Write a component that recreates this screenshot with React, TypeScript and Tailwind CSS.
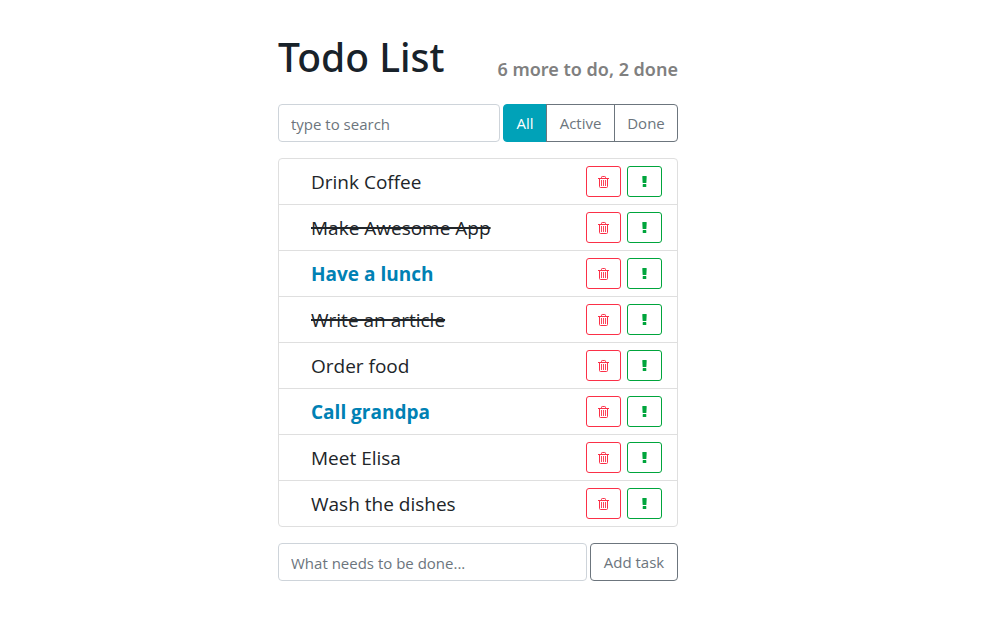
import { useState, type FormEvent } from "react";
import clsx from "clsx";

type Todo = { id: number; label: string; done?: boolean; important?: boolean };
type Filter = "All" | "Active" | "Done";

const initialTodos: Todo[] = [
  { id: 1, label: "Drink Coffee" },
  { id: 2, label: "Make Awesome App", done: true },
  { id: 3, label: "Have a lunch", important: true },
  { id: 4, label: "Write an article", done: true },
  { id: 5, label: "Order food" },
  { id: 6, label: "Call grandpa", important: true },
  { id: 7, label: "Meet Elisa" },
  { id: 8, label: "Wash the dishes" },
];

const filters: { name: Filter; width: string }[] = [
  { name: "All", width: "w-11 rounded-l" },
  { name: "Active", width: "w-[69px] -ml-px" },
  { name: "Done", width: "w-16 -ml-px rounded-r" },
];

function TrashIcon() {
  return (
    <svg viewBox="0 0 11 13" className="h-[13px] w-[11px] fill-none stroke-current" aria-hidden="true">
      <path d="M0 3.5h11M3.5 3.5v-1.2q0-.8.8-.8h2.4q.8 0 .8.8v1.2M1.5 3.5v8q0 1 1 1h6q1 0 1-1v-8" />
      <path d="M3.5 5v6M5.5 5v6M7.5 5v6" strokeWidth="0.9" />
    </svg>
  );
}

function ExclamationIcon() {
  return (
    <svg viewBox="0 0 5 13" className="h-[13px] w-[5px] fill-current" aria-hidden="true">
      <path d="M.7 1h3.6q.4 0 .4.5l-.3 6q0 .5-.5.5h-2.8q-.5 0-.5-.5l-.3-6q0-.5.4-.5zM1.2 9h2.6q.5 0 .5.5v2q0 .5-.5.5h-2.6q-.5 0-.5-.5v-2q0-.5.5-.5z" />
    </svg>
  );
}

const inputStyle =
  "h-[38px] min-w-0 flex-1 rounded border border-[#ced4da] bg-white px-3 pt-0.5 text-[15px] text-[#495057] placeholder:text-[#6c757d]";
const iconButtonStyle = "flex h-[31px] w-[35px] items-center justify-center rounded-[3px] border";

export default function App() {
  const [todos, setTodos] = useState(initialTodos);
  const [filter, setFilter] = useState<Filter>("All");
  const [term, setTerm] = useState("");
  const [label, setLabel] = useState("");

  const doneCount = todos.filter((t) => t.done).length;
  const visible = todos.filter(
    (t) =>
      t.label.toLowerCase().includes(term.toLowerCase()) &&
      (filter === "All" || (filter === "Done") === Boolean(t.done)),
  );

  const toggle = (id: number, key: "done" | "important") =>
    setTodos(todos.map((t) => (t.id === id ? { ...t, [key]: !t[key] } : t)));

  const addTask = (e: FormEvent) => {
    e.preventDefault();
    if (!label.trim()) return;
    setTodos([...todos, { id: Date.now(), label }]);
    setLabel("");
  };

  return (
    <div className="pt-8 font-['Open_Sans',sans-serif] text-[#212529] sm:pr-[52px]">
      <main className="mx-auto max-w-[400px]">
        <header className="flex items-end justify-between font-['Noto_Sans',sans-serif]">
          <h1 className="text-[39px] leading-[50px] font-medium text-[#18222a]">
            Todo List
          </h1>
          <h2 className="pb-px text-lg leading-6 font-semibold whitespace-nowrap text-[#808080]">
            {todos.length - doneCount} more to do, {doneCount} done
          </h2>
        </header>

        <div className="mt-[22px] flex gap-[3px]">
          <input
            type="text"
            aria-label="Search"
            placeholder="type to search"
            value={term}
            onChange={(e) => setTerm(e.target.value)}
            className={inputStyle}
          />
          <div className="flex">
            {filters.map(({ name, width }) => (
              <button
                key={name}
                type="button"
                onClick={() => setFilter(name)}
                className={clsx(
                  "h-[38px] border text-[15px]",
                  width,
                  filter === name
                    ? "border-[#00a2b8] bg-[#00a2b8] text-white"
                    : "border-[#6c757d] text-[#6c757d]",
                )}
              >
                {name}
              </button>
            ))}
          </div>
        </div>

        <ul className="mt-4 divide-y divide-[#dfdfdf] rounded border border-[#dfdfdf]">
          {visible.map((t) => (
            <li key={t.id} className="flex items-center gap-1.5 py-[7px] pr-[15px] pl-8">
              <button
                type="button"
                onClick={() => toggle(t.id, "done")}
                className={clsx(
                  "mr-auto text-left text-[19px] leading-[30px]",
                  t.done && "line-through decoration-2",
                  t.important && "font-bold text-[#0081b4]",
                )}
              >
                {t.label}
              </button>
              <button
                type="button"
                aria-label={`Delete ${t.label}`}
                onClick={() => setTodos(todos.filter((x) => x.id !== t.id))}
                className={clsx(iconButtonStyle, "border-[#fb3048] text-[#fb3048]")}
              >
                <TrashIcon />
              </button>
              <button
                type="button"
                aria-label={`Mark ${t.label} as important`}
                onClick={() => toggle(t.id, "important")}
                className={clsx(iconButtonStyle, "border-[#00a53c] text-[#00a53c]")}
              >
                <ExclamationIcon />
              </button>
            </li>
          ))}
        </ul>

        <form onSubmit={addTask} className="mt-4 flex gap-[3px]">
          <input
            type="text"
            aria-label="New task"
            placeholder="What needs to be done..."
            value={label}
            onChange={(e) => setLabel(e.target.value)}
            className={inputStyle}
          />
          <button
            type="submit"
            className="h-[38px] w-[88px] rounded border border-[#6c757d] text-[15px] text-[#6c757d]"
          >
            Add task
          </button>
        </form>
      </main>
    </div>
  );
}
